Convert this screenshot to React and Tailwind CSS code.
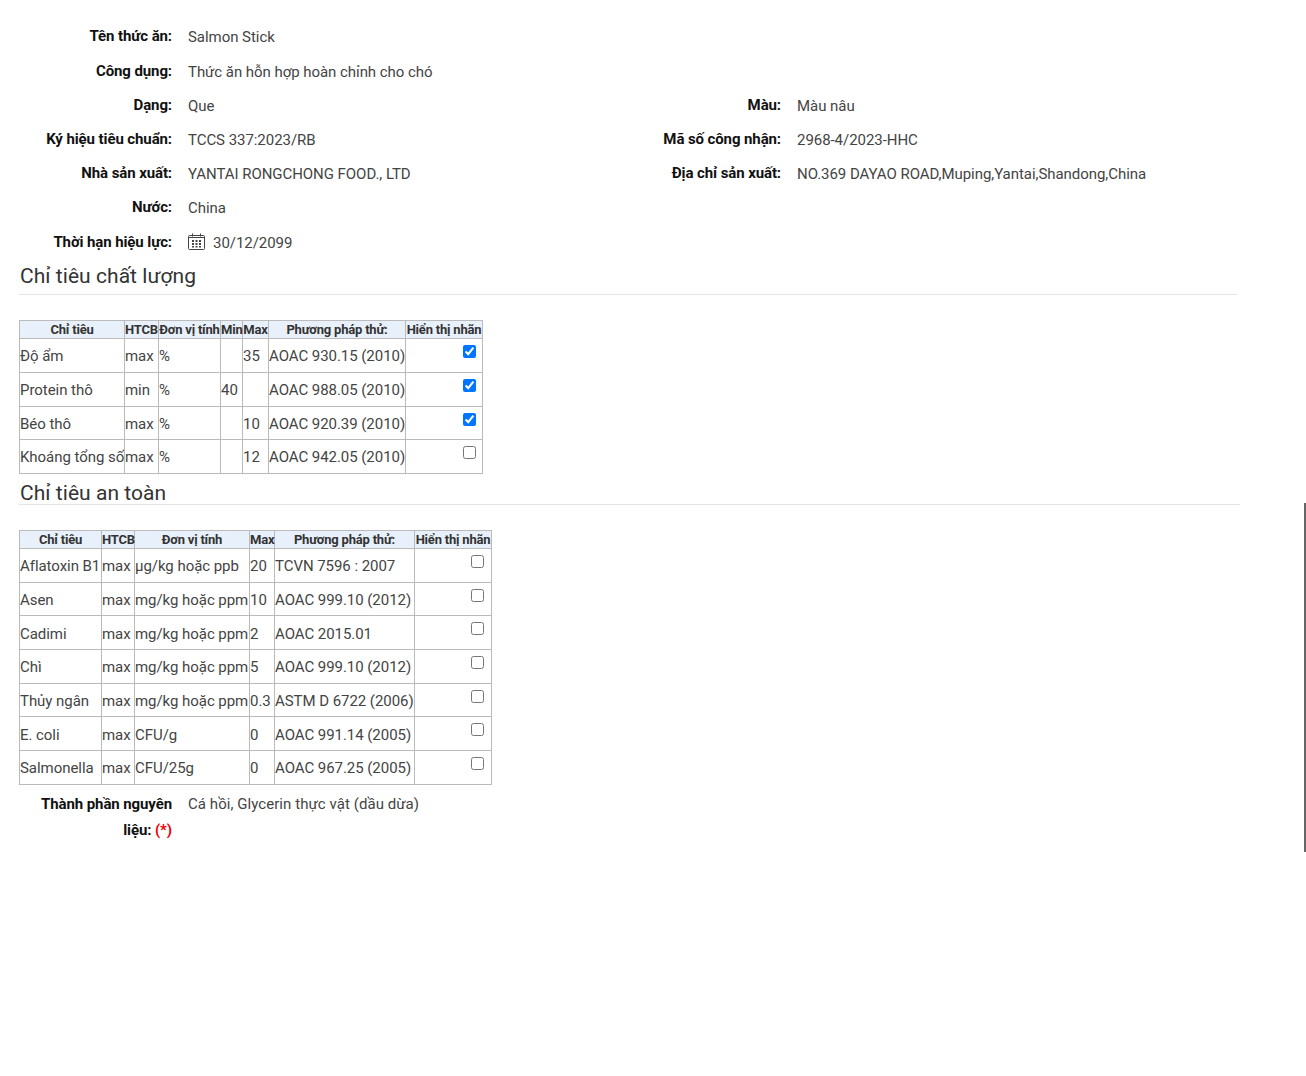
import { useState } from "react";

const quality = [
  ["Độ ẩm", "max", "%", "", "35", "AOAC 930.15 (2010)", true],
  ["Protein thô", "min", "%", "40", "", "AOAC 988.05 (2010)", true],
  ["Béo thô", "max", "%", "", "10", "AOAC 920.39 (2010)", true],
  ["Khoáng tổng số", "max", "%", "", "12", "AOAC 942.05 (2010)", false],
];

const safety = [
  ["Aflatoxin B1", "max", "µg/kg hoặc ppb", "20", "TCVN 7596 : 2007"],
  ["Asen", "max", "mg/kg hoặc ppm", "10", "AOAC 999.10 (2012)"],
  ["Cadimi", "max", "mg/kg hoặc ppm", "2", "AOAC 2015.01"],
  ["Chì", "max", "mg/kg hoặc ppm", "5", "AOAC 999.10 (2012)"],
  ["Thủy ngân", "max", "mg/kg hoặc ppm", "0.3", "ASTM D 6722 (2006)"],
  ["E. coli", "max", "CFU/g", "0", "AOAC 991.14 (2005)"],
  ["Salmonella", "max", "CFU/25g", "0", "AOAC 967.25 (2005)"],
];

function Field({ label, children }) {
  return (
    <div className="grid grid-cols-[172px_1fr] gap-x-4 h-[34.2px] items-center">
      <div className="text-right font-bold text-[#111] tracking-[-0.1px]">{label}</div>
      <div className="text-[#444] pt-0.5">{children}</div>
    </div>
  );
}

function Th({ children }) {
  return (
    <th className="border border-[#bbb] bg-[#e8f0fb] h-[18px] p-0 text-center text-[13px] leading-[16px] font-bold text-[#333] tracking-[-0.2px] whitespace-nowrap">
      {children}
    </th>
  );
}

function Td({ children }) {
  return <td className="border border-[#bbb] h-[33.7px] pl-0 pr-px pt-[2px] pb-0 text-[#444] whitespace-nowrap overflow-hidden">{children}</td>;
}

function CheckCell({ checked, gapClass }) {
  const [on, setOn] = useState(checked);
  return (
    <td className="border border-[#bbb] px-px py-0 text-right align-top">
      <input
        type="checkbox"
        checked={on}
        onChange={() => setOn(!on)}
        className={`inline-block w-[13px] h-[13px] mt-[6px] align-top ${gapClass}`}
      />
    </td>
  );
}

function CalendarIcon() {
  return (
    <svg width="17" height="17" viewBox="0 0 17 17" fill="none" stroke="#444" strokeWidth="1" className="-mt-[3px]">
      <rect x="0.5" y="2.5" width="16" height="14" rx="1" />
      <path d="M0.5 4.5h16M4.5 0.5v3M12.5 0.5v3" />
      <path
        d="M4 7h2v2h-2zM7.5 7h2v2h-2zM11 7h2v2h-2zM4 10h2v2h-2zM7.5 10h2v2h-2zM11 10h2v2h-2zM4 13h2v1.5h-2zM7.5 13h2v1.5h-2zM11 13h2v1.5h-2z"
        fill="#444"
        stroke="none"
      />
    </svg>
  );
}

export default function App() {
  return (
    <div className="relative h-[1076px] bg-white font-['Roboto',sans-serif] text-[15px] tracking-[-0.05px]">
      <div className="absolute left-[1304px] top-[503px] w-0.5 h-[349px] bg-[#666]" />
      <div className="pt-[19.6px]">
        <Field label="Tên thức ăn:">Salmon Stick</Field>
        <Field label="Công dụng:">Thức ăn hỗn hợp hoàn chỉnh cho chó</Field>
        <div className="grid grid-cols-[609px_1fr]">
          <Field label="Dạng:">Que</Field>
          <Field label="Màu:">Màu nâu</Field>
          <Field label="Ký hiệu tiêu chuẩn:">TCCS 337:2023/RB</Field>
          <Field label="Mã số công nhận:">2968-4/2023-HHC</Field>
          <Field label="Nhà sản xuất:">YANTAI RONGCHONG FOOD., LTD</Field>
          <Field label="Địa chỉ sản xuất:">NO.369 DAYAO ROAD,Muping,Yantai,Shandong,China</Field>
        </div>
        <Field label="Nước:">China</Field>
        <Field label="Thời hạn hiệu lực:">
          <span className="flex items-center gap-2">
            <CalendarIcon />
            30/12/2099
          </span>
        </Field>
      </div>

      <div className="ml-[19px] mt-[6.4px]">
        <div className="w-[1218px] border-b border-[#e5e5e5] pl-px pb-[7px] text-[21px] leading-[22px] tracking-[0.05px] text-[#333]">
          Chỉ tiêu chất lượng
        </div>
        <table className="border-collapse table-fixed w-[463px] mt-[25px]">
          <colgroup>
            <col className="w-[105px]" />
            <col className="w-[34px]" />
            <col className="w-[62px]" />
            <col className="w-[22px]" />
            <col className="w-[26px]" />
            <col className="w-[137px]" />
            <col className="w-[77px]" />
          </colgroup>
          <thead>
            <tr>
              {["Chỉ tiêu", "HTCB", "Đơn vị tính", "Min", "Max", "Phương pháp thử:", "Hiển thị nhãn"].map((h) => (
                <Th key={h}>{h}</Th>
              ))}
            </tr>
          </thead>
          <tbody>
            {quality.map((row) => (
              <tr key={row[0]}>
                {row.slice(0, 6).map((c, i) => (
                  <Td key={i}>{c}</Td>
                ))}
                <CheckCell checked={row[6]} gapClass="mr-[5px]" />
              </tr>
            ))}
          </tbody>
        </table>

        <div className="w-[1221px] mt-[8px] border-b border-[#e5e5e5] pl-px text-[21px] leading-[22px] tracking-[0.05px] text-[#333]">
          Chỉ tiêu an toàn
        </div>
        <table className="border-collapse table-fixed w-[472px] mt-[25px]">
          <colgroup>
            <col className="w-[82px]" />
            <col className="w-[33px]" />
            <col className="w-[115px]" />
            <col className="w-[25px]" />
            <col className="w-[140px]" />
            <col className="w-[77px]" />
          </colgroup>
          <thead>
            <tr>
              {["Chỉ tiêu", "HTCB", "Đơn vị tính", "Max", "Phương pháp thử:", "Hiển thị nhãn"].map((h) => (
                <Th key={h}>{h}</Th>
              ))}
            </tr>
          </thead>
          <tbody>
            {safety.map((row) => (
              <tr key={row[0]}>
                {row.map((c, i) => (
                  <Td key={i}>{c}</Td>
                ))}
                <CheckCell checked={false} gapClass="mr-[6px]" />
              </tr>
            ))}
          </tbody>
        </table>
      </div>

      <div className="grid grid-cols-[172px_1fr] gap-x-4 mt-1.5">
        <div className="text-right font-bold text-[#111] tracking-[-0.1px] leading-[26px]">
          Thành phần nguyên
          <br />
          liệu: <span className="text-[#e00]">(*)</span>
        </div>
        <div className="text-[#444] tracking-[0.06px] leading-[26px]">Cá hồi, Glycerin thực vật (dầu dừa)</div>
      </div>
    </div>
  );
}
